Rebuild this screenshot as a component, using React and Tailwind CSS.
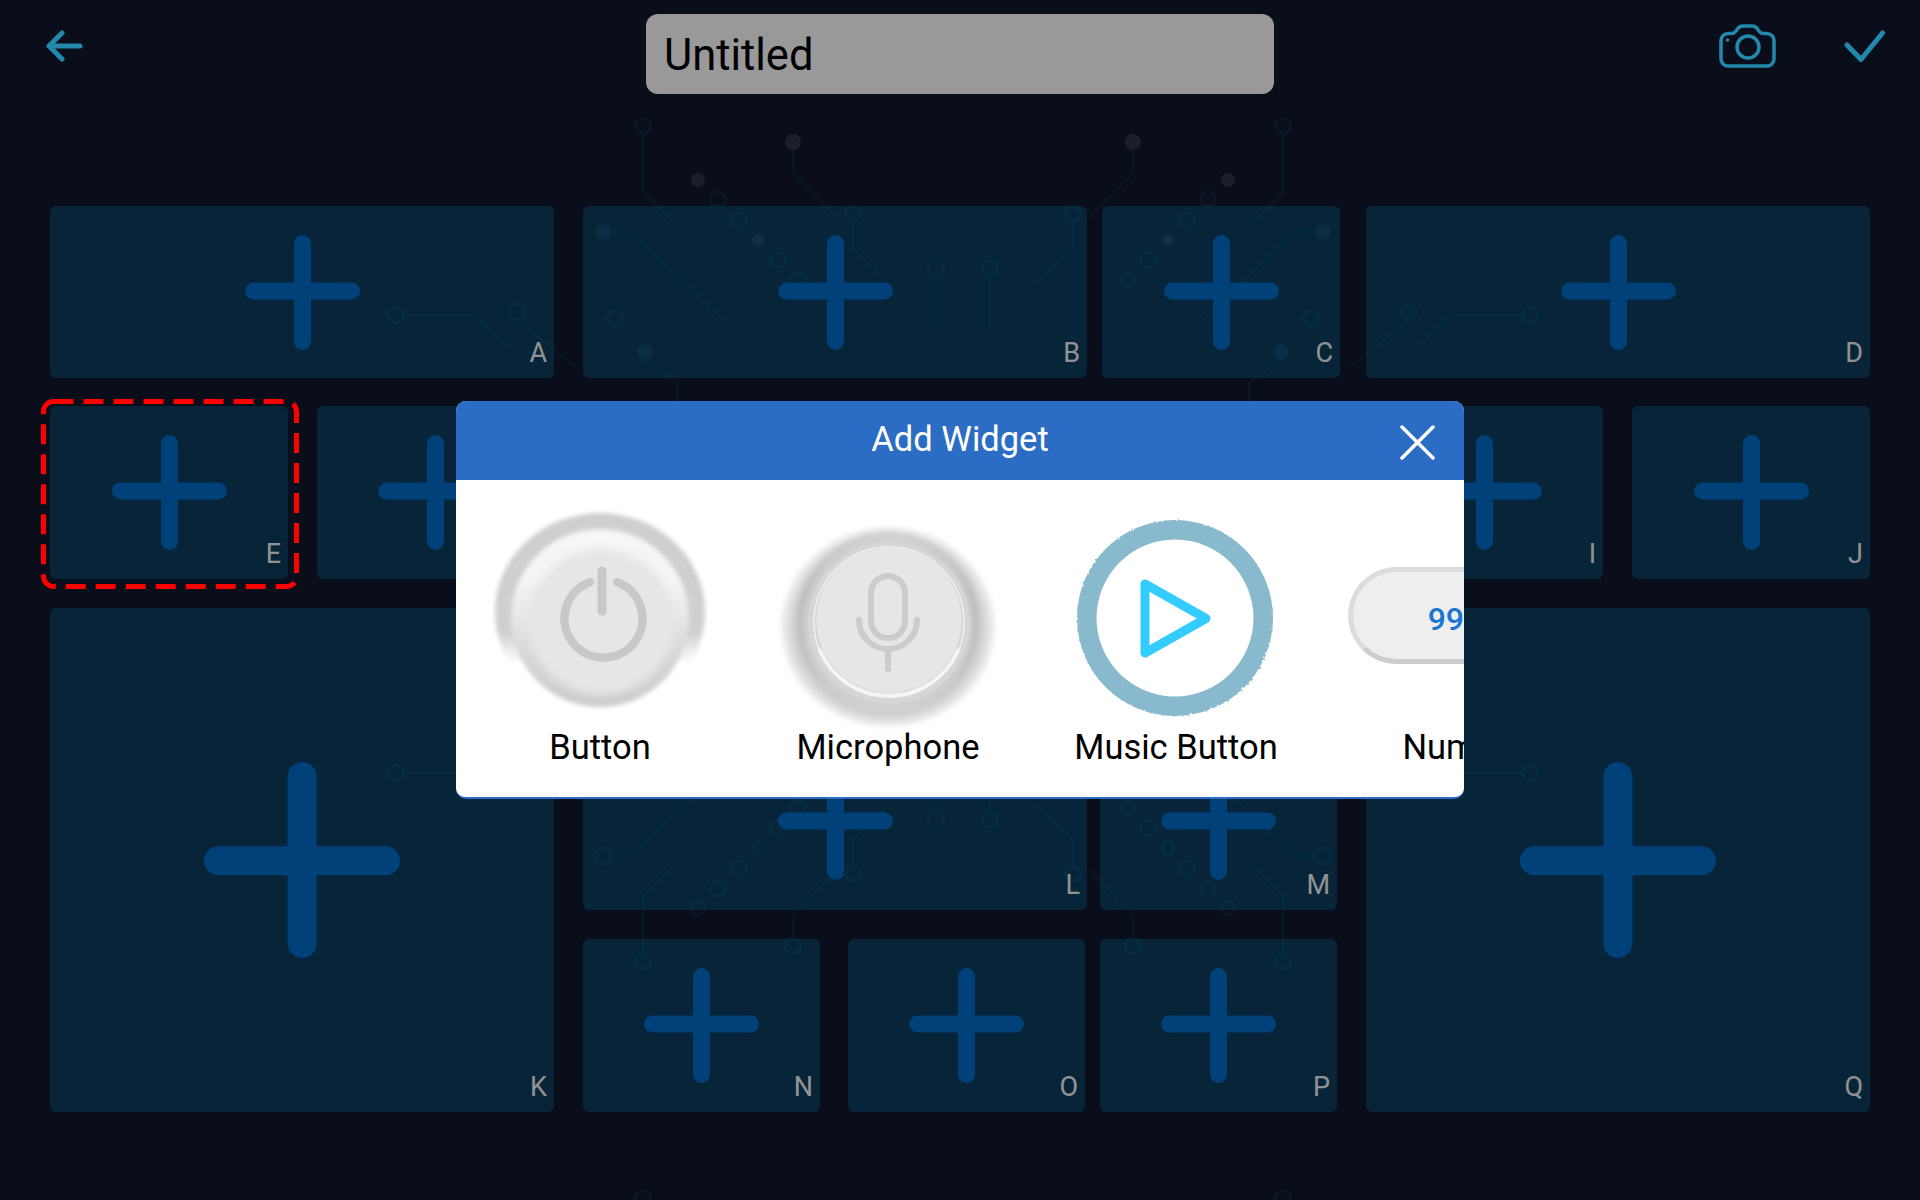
import React from 'react';

const font = '[font-family:Roboto,sans-serif]';

const Plus = ({ large }) => (
  <svg viewBox="0 0 115 115" className={large ? 'h-[196px] w-[196px]' : 'h-[115px] w-[115px]'}>
    <rect x="0" y={large ? 49.5 : 47.5} width="115" height="17" rx="8.5" fill="#006dcb" />
    <rect x="49" y="0" width="17" height="115" rx="8.5" fill="#006dcb" />
  </svg>
);

const Tile = ({ label, width, height, large, selected }) => (
  <div className={`relative flex shrink-0 items-center justify-center rounded-[6px] bg-[#00a8fc]/25 ${width} ${height}`}>
    <Plus large={large} />
    <span className={`absolute bottom-[9px] right-[7px] text-[27px] leading-[32px] text-[#f4f4f4] ${font}`}>{label}</span>
    {selected && (
      <svg className="absolute -left-[9px] -top-[7px] z-20 h-[190px] w-[258px]" viewBox="0 0 258 190">
        <rect x="2.5" y="2.5" width="253" height="185" rx="10" fill="none" stroke="#ff0000" strokeWidth="5" strokeDasharray="20 10" />
      </svg>
    )}
  </div>
);

const Traces = ({ filled }) => (
  <g fill="none" stroke="#11293e" strokeWidth="2">
    <path d="M643 134V192L673 222" />
    <path d="M793 150V173L836 217" />
    <path d="M853 222V248L888 282" />
    <path d="M611 232H631L723 320" />
    <path d="M645 360L677 383V500" />
    <path d="M936 276V330" />
    <path d="M517 320L576 367" />
    <path d="M404 315H475L508 347" />
    {[[643, 126], [718, 199], [739, 220], [778, 260], [798, 280], [615, 318], [853, 214], [936, 268], [517, 312], [396, 315]].map(([x, y]) => (
      <circle key={`${x}-${y}`} cx={x} cy={y} r="7.5" strokeWidth="3" />
    ))}
    {[[793, 142, 8, '#2d3547'], [698, 180, 7, '#2d3547'], [758, 240, 6, '#243246'], [603, 232, 8, '#1c2e44'], [645, 352, 8, '#1c2e44']].map(([x, y, r, c]) => (
      <circle
        key={`${x}-${y}`}
        cx={x}
        cy={y}
        r={r}
        fill={filled ? c : 'none'}
        stroke={filled ? 'none' : '#11293e'}
        strokeWidth="3"
      />
    ))}
  </g>
);

const CircuitBackground = () => (
  <svg className="absolute inset-0 h-full w-full" viewBox="0 0 1920 1200">
    <Traces filled />
    <g transform="translate(1926,0) scale(-1,1)"><Traces filled /></g>
    <g transform="translate(0,1088) scale(1,-1)"><Traces /></g>
    <g transform="translate(1926,1088) scale(-1,-1)"><Traces /></g>
    <circle cx="643" cy="1198" r="7.5" fill="none" stroke="#11293e" strokeWidth="3" />
    <circle cx="1283" cy="1198" r="7.5" fill="none" stroke="#11293e" strokeWidth="3" />
  </svg>
);

const PowerWidget = () => (
  <svg viewBox="0 0 240 240" className="h-[240px] w-[240px]">
    <defs>
      <filter id="soft" x="-10%" y="-10%" width="120%" height="120%"><feGaussianBlur stdDeviation="2" /></filter>
      <filter id="softer" x="-10%" y="-10%" width="120%" height="120%"><feGaussianBlur stdDeviation="4" /></filter>
      <linearGradient id="band" x1="0" y1="0" x2="0" y2="1">
        <stop offset="0" stopColor="#cfcfcf" />
        <stop offset="0.6" stopColor="#cfcfcf" />
        <stop offset="0.76" stopColor="#ffffff" />
      </linearGradient>
      <linearGradient id="rim" x1="0" y1="0" x2="0" y2="1">
        <stop offset="0" stopColor="#f6f6f6" />
        <stop offset="0.3" stopColor="#f4f4f4" />
        <stop offset="0.7" stopColor="#d8d8d8" />
        <stop offset="1" stopColor="#cbcbcb" />
      </linearGradient>
    </defs>
    <ellipse cx="120" cy="122" rx="105" ry="99" fill="url(#band)" filter="url(#soft)" />
    <circle cx="120" cy="128" r="89" fill="url(#rim)" filter="url(#soft)" />
    <circle cx="121" cy="132" r="73" fill="#e6e6e6" filter="url(#softer)" />
    <path d="M110 92A39 39 0 1 0 137 92" fill="none" stroke="#c9c7c9" strokeWidth="8.5" strokeLinecap="round" />
    <path d="M122 81V121" fill="none" stroke="#c9c7c9" strokeWidth="9" strokeLinecap="round" />
  </svg>
);

const MicWidget = () => (
  <svg viewBox="0 0 240 240" className="h-[240px] w-[240px]">
    <defs>
      <filter id="micsoft" x="-10%" y="-10%" width="120%" height="120%"><feGaussianBlur stdDeviation="2.5" /></filter>
      <filter id="micglow"><feGaussianBlur stdDeviation="0.8" /></filter>
      <radialGradient id="outerBand">
        <stop offset="0" stopColor="#d0d0d0" />
        <stop offset="0.88" stopColor="#d0d0d0" />
        <stop offset="1" stopColor="#f2f2f2" />
      </radialGradient>
      <linearGradient id="darkRing" x1="0" y1="0" x2="0" y2="1">
        <stop offset="0" stopColor="#d0d0d0" />
        <stop offset="0.35" stopColor="#bcbcbc" />
        <stop offset="0.7" stopColor="#c2c2c2" />
        <stop offset="1" stopColor="#d0d0d0" />
      </linearGradient>
    </defs>
    <ellipse cx="120" cy="137" rx="107" ry="100" fill="url(#outerBand)" filter="url(#micsoft)" />
    <circle cx="120" cy="134" r="88" fill="none" stroke="url(#darkRing)" strokeWidth="7" filter="url(#micsoft)" />
    <circle cx="121" cy="133" r="81" fill="#d6d6d6" />
    <circle cx="121" cy="132" r="75" fill="none" stroke="#f0f0f0" strokeWidth="1.5" />
    <path d="M52 160A75 75 0 0 0 190 160" fill="none" stroke="#ffffff" strokeWidth="3" strokeLinecap="round" filter="url(#micglow)" />
    <circle cx="121" cy="130" r="72.5" fill="#e6e6e6" />
    <rect x="103" y="86" width="34" height="62" rx="17" fill="none" stroke="#cdcbcd" strokeWidth="6" />
    <path d="M91 130A29 29 0 0 0 149 130M120 159V179" fill="none" stroke="#cdcbcd" strokeWidth="6" strokeLinecap="round" />
  </svg>
);

const MusicWidget = () => (
  <svg viewBox="0 0 240 240" className="h-[240px] w-[240px]">
    <defs>
      <filter id="rough" x="-5%" y="-5%" width="110%" height="110%">
        <feTurbulence type="fractalNoise" baseFrequency="0.35" numOctaves="1" seed="3" result="n" />
        <feDisplacementMap in="SourceGraphic" in2="n" scale="3" />
      </filter>
    </defs>
    <circle cx="119" cy="128" r="98" fill="#88b9cd" filter="url(#rough)" />
    <circle cx="119" cy="128" r="78.5" fill="#ffffff" />
    <path d="M89 94L150 128.5L89 163Z" fill="none" stroke="#33ccff" strokeWidth="9" strokeLinejoin="round" />
  </svg>
);

const NumberWidget = () => (
  <div className="flex h-[240px] items-center justify-center">
    <div className={`mt-[11px] flex h-[97px] w-[232px] items-center justify-center rounded-full border-[5px] border-[#dcdcdc] border-b-[#cccccc] bg-[#eeeeef] pt-[6px] text-[32px] font-medium text-[#1976d2] ${font}`}>
      9999
    </div>
  </div>
);

const widgets = [
  { name: 'Button', icon: <PowerWidget /> },
  { name: 'Microphone', icon: <MicWidget /> },
  { name: 'Music Button', icon: <MusicWidget /> },
  { name: 'Number', icon: <NumberWidget /> },
];

const AddWidgetDialog = () => (
  <div className={`relative flex h-[398px] w-[1008px] flex-col overflow-hidden rounded-[10px] border-b-2 border-[#2b6cc4] bg-white ${font}`}>
    <div className="relative flex h-[79px] shrink-0 items-center justify-center bg-[#2b6cc4] pb-[2px] text-[34.5px] text-white">
      Add Widget
      <svg className="absolute right-[29px] top-[24px] h-[35px] w-[35px]" viewBox="0 0 35 35">
        <path d="M2 2L33 33M33 2L2 33" fill="none" stroke="#ffffff" strokeWidth="3.5" strokeLinecap="round" />
      </svg>
    </div>
    <div className="flex flex-1 overflow-hidden pt-[10px]">
      {widgets.map((w) => (
        <div key={w.name} className="flex w-[288px] shrink-0 flex-col items-center">
          {w.icon}
          <div className="-mt-[1px] text-[34.5px] leading-[36px] text-black">{w.name}</div>
        </div>
      ))}
    </div>
  </div>
);

const App = () => {
  return (
    <div className="relative h-screen w-full overflow-hidden bg-[#10182c]">
      <CircuitBackground />
      <div className="relative">
        <header className="grid h-[206px] grid-cols-[646px_628px_1fr] pt-[14px]">
          <div className="pl-[45px] pt-[16px]">
            <svg className="relative z-20 h-[32px] w-[38px]" viewBox="0 0 38 32">
              <path d="M35 16H4M17 3L4 16L17 29" fill="none" stroke="#2389ac" strokeWidth="5" strokeLinecap="round" strokeLinejoin="round" />
            </svg>
          </div>
          <div className={`flex h-[80px] items-center rounded-[12px] bg-white pl-[18px] pt-[3px] text-[43.5px] text-black ${font}`}>Untitled</div>
          <div className="flex items-start justify-end gap-[68px] pr-[34px] pt-[10px]">
            <svg className="relative z-20 h-[45px] w-[57px]" viewBox="0 0 57 45">
              <path d="M9 9.5h4c2 0 3-1 4.5-3C19 3.5 21 2 24 2H33c3 0 5 1.500 6.500 4.500C41 8.500 42 9.500 44 9.500H48a7 7 0 0 1 7 7V35a7 7 0 0 1-7 7H9a7 7 0 0 1-7-7V16.500a7 7 0 0 1 7-7Z" fill="none" stroke="#2389ac" strokeWidth="3.5" strokeLinejoin="round" />
              <circle cx="29" cy="23" r="11" fill="none" stroke="#2389ac" strokeWidth="3.5" />
              <circle cx="8.500" cy="16" r="1.800" fill="#2389ac" />
            </svg>
            <svg className="relative z-20 mt-[6px] h-[33px] w-[42px]" viewBox="0 0 42 33">
              <path d="M3 15L17 29.500L38.500 3" fill="none" stroke="#2389ac" strokeWidth="5" strokeLinecap="round" strokeLinejoin="round" />
            </svg>
          </div>
        </header>

        <div className="pl-[50px]">
          <div className="flex">
            <Tile label="A" width="w-[504px]" height="h-[172px]" />
            <div className="ml-[29px]"><Tile label="B" width="w-[504px]" height="h-[172px]" /></div>
            <div className="ml-[15px]"><Tile label="C" width="w-[238px]" height="h-[172px]" /></div>
            <div className="ml-[26px]"><Tile label="D" width="w-[504px]" height="h-[172px]" /></div>
          </div>

          <div className="mt-[28px] flex">
            <Tile label="E" width="w-[238px]" height="h-[173px]" selected />
            <div className="ml-[29px]"><Tile label="F" width="w-[237px]" height="h-[173px]" /></div>
            <div className="ml-[29px]"><Tile label="G" width="w-[504px]" height="h-[173px]" /></div>
            <div className="ml-[13px]"><Tile label="H" width="w-[237px]" height="h-[173px]" /></div>
            <div className="ml-[29px]"><Tile label="I" width="w-[237px]" height="h-[173px]" /></div>
            <div className="ml-[29px]"><Tile label="J" width="w-[238px]" height="h-[173px]" /></div>
          </div>

          <div className="mt-[29px] flex">
            <Tile label="K" width="w-[504px]" height="h-[504px]" large />
            <div className="ml-[29px] flex w-[754px] flex-col pt-[127px]">
              <div className="flex">
                <Tile label="L" width="w-[504px]" height="h-[175px]" />
                <div className="ml-[13px]"><Tile label="M" width="w-[237px]" height="h-[175px]" /></div>
              </div>
              <div className="mt-[29px] flex">
                <Tile label="N" width="w-[237px]" height="h-[173px]" />
                <div className="ml-[28px]"><Tile label="O" width="w-[237px]" height="h-[173px]" /></div>
                <div className="ml-[15px]"><Tile label="P" width="w-[237px]" height="h-[173px]" /></div>
              </div>
            </div>
            <div className="ml-[29px]"><Tile label="Q" width="w-[504px]" height="h-[504px]" large /></div>
          </div>
        </div>
      </div>

      <div className="absolute inset-0 z-10 flex items-center justify-center bg-black/40">
        <AddWidgetDialog />
      </div>
    </div>
  );
};

export default App;
